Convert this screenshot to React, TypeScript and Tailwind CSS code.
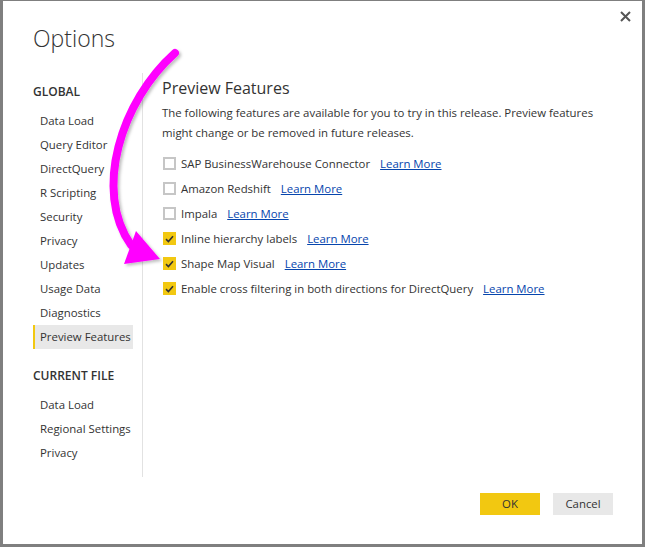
import React from 'react';

const globalItems = [
  'Data Load',
  'Query Editor',
  'DirectQuery',
  'R Scripting',
  'Security',
  'Privacy',
  'Updates',
  'Usage Data',
  'Diagnostics',
  'Preview Features',
];

const fileItems = ['Data Load', 'Regional Settings', 'Privacy'];

const features = [
  { label: 'SAP BusinessWarehouse Connector', on: false },
  { label: 'Amazon Redshift', on: false },
  { label: 'Impala', on: false },
  { label: 'Inline hierarchy labels', on: true },
  { label: 'Shape Map Visual', on: true },
  { label: 'Enable cross filtering in both directions for DirectQuery', on: true },
];

const Checkbox = ({ on }: { on: boolean }) =>
  on ? (
    <span className="w-[13px] h-[13px] bg-[#f2c811] flex items-center justify-center shrink-0">
      <svg width="9" height="8" viewBox="0 0 9 8">
        <path d="M1 4.2 L3.4 6.5 L8 1.2" fill="none" stroke="#333" strokeWidth="1.6" />
      </svg>
    </span>
  ) : (
    <span className="w-[13px] h-[13px] border-2 border-[#c6c6c6] bg-white shrink-0" />
  );

const NavItem = ({ label, active }: { label: string; active?: boolean }) => (
  <div
    className={`h-[24px] flex items-center w-[100px] whitespace-nowrap ${
      active ? 'bg-[#e8e8e8] border-l-2 border-[#f2c811] pl-[5px]' : 'pl-[7px]'
    }`}
  >
    {label}
  </div>
);

export default function App() {
  return (
    <div
      className="relative w-[645px] h-[547px] bg-white border-t border-l-[3px] border-r-[3px] border-b-[3px] border-[#7f7f7f] text-[#333] text-[11.4px]"
      style={{ fontFamily: '"Open Sans", "Noto Sans", sans-serif' }}
    >
      {/* Close */}
      <svg className="absolute right-[11px] top-[10px]" width="11" height="11" viewBox="0 0 11 11">
        <path d="M1 1 L10 10 M10 1 L1 10" stroke="#555" strokeWidth="2" />
      </svg>

      <div className="pl-[30px] pt-[19px] h-[60px]">
        <h1 className="text-[23px] font-light leading-[36px] text-[#333]">Options</h1>
      </div>

      <div className="flex h-[416px] pt-[12px] pl-[30px]">
        {/* Sidebar */}
        <div className="w-[110px] shrink-0 border-r border-[#e2e2e2]">
          <div className="font-semibold text-[12px] h-[20px] flex items-center mt-[9px] mb-[7px]">GLOBAL</div>
          {globalItems.map((it) => (
            <NavItem key={it} label={it} active={it === 'Preview Features'} />
          ))}
          <div className="font-semibold text-[12px] h-[20px] flex items-center mt-[17px] mb-[7px]">CURRENT FILE</div>
          {fileItems.map((it) => (
            <NavItem key={it} label={it} />
          ))}
        </div>

        {/* Content */}
        <div className="pl-[19px] pt-[4px] flex-1">
          <h2 className="text-[16px] leading-[22px] text-[#333]">Preview Features</h2>
          <p className="mt-[4px] leading-[20px] pr-[20px]">
            The following features are available for you to try in this release. Preview features
            might change or be removed in future releases.
          </p>
          <div className="mt-[8px] pl-[1px]">
            {features.map((f) => (
              <div key={f.label} className="h-[25px] flex items-center">
                <Checkbox on={f.on} />
                <span className="ml-[5px]">{f.label}</span>
                <a className="ml-[10px] text-[#0645ad] underline">Learn More</a>
              </div>
            ))}
          </div>
        </div>
      </div>

      {/* Buttons */}
      <div className="flex justify-end gap-[13px] pr-[29px] pt-[16px]">
        <button className="w-[60px] h-[22px] bg-[#f2c811] text-[#333]">OK</button>
        <button className="w-[60px] h-[22px] bg-[#e8e8e8] text-[#333]">Cancel</button>
      </div>

      {/* Annotation arrow */}
      <svg className="absolute left-0 top-0 pointer-events-none" width="645" height="547">
        <defs>
          <filter id="sh" x="-20%" y="-20%" width="140%" height="140%">
            <feDropShadow dx="2" dy="2" stdDeviation="1.5" floodColor="#000" floodOpacity="0.25" />
          </filter>
        </defs>
        <g filter="url(#sh)">
          <path
            d="M172 52 C 118 100 90 190 128 244"
            fill="none"
            stroke="#ff00ff"
            strokeWidth="8"
            strokeLinecap="round"
          />
          <polygon points="133,230 121,263 157,258" fill="#ff00ff" />
        </g>
      </svg>
    </div>
  );
}
